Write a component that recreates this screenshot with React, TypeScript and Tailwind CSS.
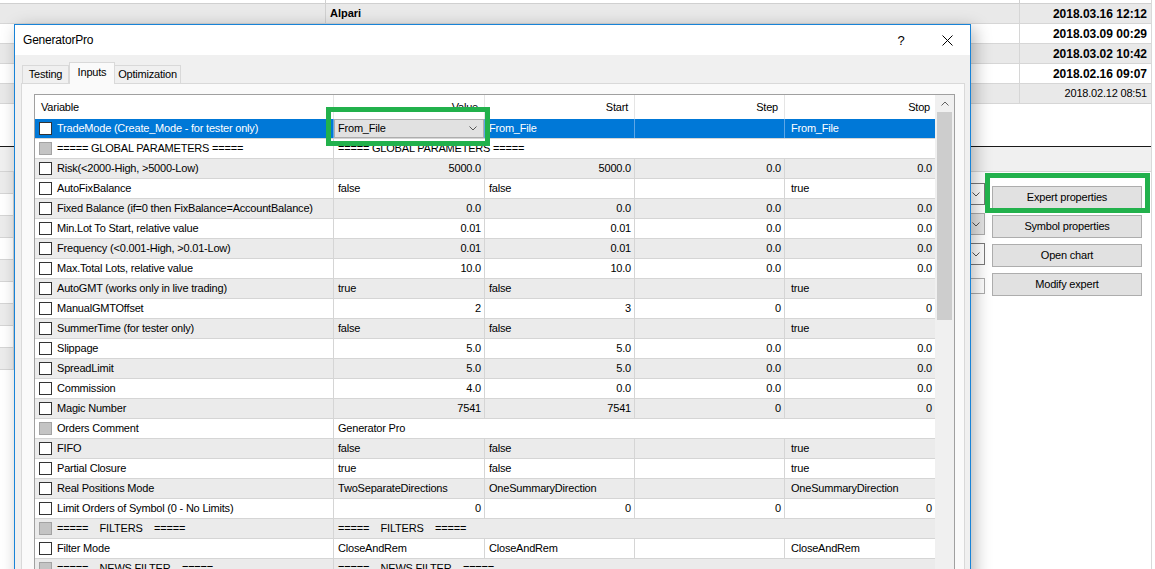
import React from 'react';

type Param = {
  name: string;
  gray?: boolean;
  num?: boolean;
  span?: string;
  v?: string;
  s?: string;
  st?: string;
  sp?: string;
};

const params: Param[] = [
  { name: 'TradeMode (Create_Mode - for tester only)', v: 'From_File', s: 'From_File', st: '', sp: 'From_File' },
  { name: '===== GLOBAL PARAMETERS =====', gray: true, span: '===== GLOBAL PARAMETERS =====' },
  { name: 'Risk(<2000-High, >5000-Low)', num: true, v: '5000.0', s: '5000.0', st: '0.0', sp: '0.0' },
  { name: 'AutoFixBalance', v: 'false', s: 'false', st: '', sp: 'true' },
  { name: 'Fixed Balance (if=0 then FixBalance=AccountBalance)', num: true, v: '0.0', s: '0.0', st: '0.0', sp: '0.0' },
  { name: 'Min.Lot To Start, relative value', num: true, v: '0.01', s: '0.01', st: '0.0', sp: '0.0' },
  { name: 'Frequency (<0.001-High, >0.01-Low)', num: true, v: '0.01', s: '0.01', st: '0.0', sp: '0.0' },
  { name: 'Max.Total Lots, relative value', num: true, v: '10.0', s: '10.0', st: '0.0', sp: '0.0' },
  { name: 'AutoGMT (works only in live trading)', v: 'true', s: 'false', st: '', sp: 'true' },
  { name: 'ManualGMTOffset', num: true, v: '2', s: '3', st: '0', sp: '0' },
  { name: 'SummerTime (for tester only)', v: 'false', s: 'false', st: '', sp: 'true' },
  { name: 'Slippage', num: true, v: '5.0', s: '5.0', st: '0.0', sp: '0.0' },
  { name: 'SpreadLimit', num: true, v: '5.0', s: '5.0', st: '0.0', sp: '0.0' },
  { name: 'Commission', num: true, v: '4.0', s: '0.0', st: '0.0', sp: '0.0' },
  { name: 'Magic Number', num: true, v: '7541', s: '7541', st: '0', sp: '0' },
  { name: 'Orders Comment', gray: true, span: 'Generator Pro' },
  { name: 'FIFO', v: 'false', s: 'false', st: '', sp: 'true' },
  { name: 'Partial Closure', v: 'true', s: 'false', st: '', sp: 'true' },
  { name: 'Real Positions Mode', v: 'TwoSeparateDirections', s: 'OneSummaryDirection', st: '', sp: 'OneSummaryDirection' },
  { name: 'Limit Orders of Symbol (0 - No Limits)', num: true, v: '0', s: '0', st: '0', sp: '0' },
  { name: '=====    FILTERS    =====', gray: true, span: '=====    FILTERS    =====' },
  { name: 'Filter Mode', v: 'CloseAndRem', s: 'CloseAndRem', st: '', sp: 'CloseAndRem' },
  { name: '=====    NEWS FILTER    =====', gray: true, span: '=====    NEWS FILTER    =====' },
];

const history = [
  { label: 'Alpari', date: '2018.03.16 12:12', bold: true },
  { label: '', date: '2018.03.09 00:29', bold: true },
  { label: '', date: '2018.03.02 10:42', bold: true },
  { label: '', date: '2018.02.16 09:07', bold: true },
  { label: '', date: '2018.02.12 08:51', bold: false },
];

function Chevron({ up = false, className = '' }: { up?: boolean; className?: string }) {
  return (
    <svg width="8" height="5" viewBox="0 0 8 5" className={className}>
      <path d={up ? 'M0.5 4.5 L4 1 L7.5 4.5' : 'M0.5 0.5 L4 4 L7.5 0.5'} fill="none" stroke="currentColor" strokeWidth="1" />
    </svg>
  );
}

function CheckBox({ gray }: { gray?: boolean }) {
  return (
    <div
      className={`w-[13px] h-[13px] shrink-0 border ${
        gray ? 'bg-[#c4c4c4] border-[#a3a3a3]' : 'bg-white border-[#333333]'
      }`}
    />
  );
}

/**
 * Background terminal window behind the dialog
 */
function Terminal() {
  return (
    <div className="flex flex-col w-[1152px] h-full border-r border-[#d9d9d9]">
      <div className="h-[4px] flex border-b border-[#d0d0d0]">
        <div className="w-[326px] border-r border-[#d0d0d0]" />
        <div className="flex-1" />
        <div className="w-[132px] border-l border-[#d0d0d0]" />
      </div>

      {/* history rows */}
      {history.map((h, i) => (
        <div
          key={h.date}
          className={`flex h-5 border-b border-[#d6d6d6] ${i % 2 === 0 ? 'bg-[#e9e9e9]' : 'bg-white'}`}
        >
          <div className="w-[326px] border-r border-[#d0d0d0]" />
          <div className="flex-1 flex items-center pl-[4px] font-bold tracking-normal">{h.label}</div>
          <div
            className={`w-[132px] border-l border-[#d6d6d6] flex items-center justify-end pr-[4px] ${
              h.bold ? 'font-bold text-[12px] tracking-normal' : ''
            }`}
          >
            {h.date}
          </div>
        </div>
      ))}

      <div className="h-[43px] bg-white border-b border-[#1a1a1a]" />
      <div className="h-[25px] bg-[#f0f0f0] border-b border-[#d5d5d5]" />

      {/* lower panel */}
      <div className="flex flex-1 bg-white">
        <div className="w-[14px] flex flex-col">
          {[0, 1, 2, 3, 4, 5, 6, 7, 8].map((n) => (
            <div
              key={n}
              className={`h-[22px] border-b border-r border-[#d5d5d5] ${n % 2 === 0 ? 'bg-[#ececec]' : 'bg-white'}`}
            />
          ))}
        </div>

        <div className="w-[975px] flex flex-col items-end pt-[11px] pr-[4px]">
          <div className="w-[120px] h-[22px] border border-[#7a7a7a] bg-white flex items-center justify-end pr-[4px] text-[#555]">
            <Chevron />
          </div>
          <div className="mt-[8px] w-[120px] h-[22px] border border-[#adadad] bg-[#e5e5e5] flex items-center justify-end pr-[4px] text-[#555]">
            <Chevron />
          </div>
          <div className="mt-[8px] w-[120px] h-[22px] border border-[#7a7a7a] bg-white flex items-center justify-end pr-[4px] text-[#555]">
            <Chevron />
          </div>
          <div className="mt-[13px] w-[120px] h-[16px] border border-[#adadad] bg-white" />
        </div>

        <div className="w-[150px] ml-[3px] flex flex-col pt-[14px] gap-[6px]">
          {['Expert properties', 'Symbol properties', 'Open chart', 'Modify expert'].map((b) => (
            <div
              key={b}
              className="h-[23px] bg-[#e1e1e1] border border-[#adadad] flex items-center justify-center"
            >
              {b}
            </div>
          ))}
        </div>
        <div className="flex-1" />
      </div>
    </div>
  );
}

function ParamRow({ p, i }: { p: Param; i: number }) {
  const sel = i === 0;
  const bg = sel ? 'bg-[#0078d7] text-white' : i % 2 === 0 ? 'bg-[#ebebeb]' : 'bg-white';
  const line = sel ? 'border-[#5ea6e6]' : 'border-[#d5d5d5]';
  const cells = [p.v, p.s, p.st, p.sp];
  const widths = ['w-[151px]', 'w-[150px]', 'w-[150px]', 'w-[150px]'];

  return (
    <div className={`flex h-5 shrink-0 border-b border-[#d5d5d5] ${bg}`}>
      <div className={`w-[299px] flex items-center pl-[4px] border-r ${line}`}>
        <CheckBox gray={p.gray} />
        <span className="ml-[5px] whitespace-pre">{p.name}</span>
      </div>

      {p.span !== undefined ? (
        <div className="w-[601px] flex items-center pl-[4px] whitespace-pre">{p.span}</div>
      ) : (
        cells.map((c, ci) => {
          // value cell of the selected row is an open combobox
          if (sel && ci === 0) {
            return (
              <div key={ci} className={`${widths[ci]} border-r ${line}`}>
                <div className="h-full bg-[#e1e1e1] border border-[#adadad] flex items-center pl-[3px] pr-[6px] text-black">
                  <span className="flex-1">{c}</span>
                  <Chevron className="text-[#555]" />
                </div>
              </div>
            );
          }
          return (
            <div
              key={ci}
              className={`${widths[ci]} flex items-center ${ci < 3 ? `border-r ${line}` : ''} ${
                p.num ? 'justify-end pr-[3px]' : ci === 3 ? 'pl-[6px]' : 'pl-[4px]'
              }`}
            >
              {c}
            </div>
          );
        })
      )}
    </div>
  );
}

/**
 * Expert properties dialog
 */
function Dialog() {
  return (
    <div className="absolute left-[14px] top-[24px] w-[957px] h-[560px] border border-[#1883d7] bg-[#f0f0f0] flex flex-col shadow-[4px_4px_16px_rgba(0,0,0,0.28)]">
      {/* Title bar */}
      <div className="h-[30px] shrink-0 bg-white flex items-center">
        <span className="flex-1 pl-[8px] text-[12px]">GeneratorPro</span>
        <div className="w-[46px] h-full flex items-center justify-center text-[13px] tracking-normal">?</div>
        <div className="w-[46px] h-full flex items-center justify-center">
          <svg width="11" height="11" viewBox="0 0 11 11">
            <path d="M0.5 0.5 L10.5 10.5 M10.5 0.5 L0.5 10.5" stroke="#000" strokeWidth="1" />
          </svg>
        </div>
      </div>

      <div className="flex-1 flex flex-col pl-[6px] pt-[7px]">
        {/* Tabs */}
        <div className="h-[21px] shrink-0 flex items-end pl-[1px]">
          <div className="w-[47px] h-[18px] border border-b-0 border-[#d9d9d9] flex items-center justify-center">
            Testing
          </div>
          <div className="relative z-10 w-[46px] h-[22px] -mb-px border border-b-0 border-[#d9d9d9] bg-[#fafafa] flex items-center justify-center pb-[2px]">
            Inputs
          </div>
          <div className="w-[66px] h-[18px] border border-l-0 border-b-0 border-[#d9d9d9] flex items-center justify-center">
            Optimization
          </div>
        </div>

        {/* Tab panel */}
        <div className="w-[944px] flex-1 border border-[#d9d9d9] bg-[#fafafa] pl-[12px] pt-[10px]">
          <div className="w-[921px] h-[480px] border border-[#a0a0a0] bg-white flex">
            <div className="w-[900px] flex flex-col">
              {/* header */}
              <div className="h-[24px] shrink-0 flex bg-white">
                <div className="w-[299px] border-r border-[#e5e5e5] flex items-center pl-[6px]">Variable</div>
                <div className="w-[151px] border-r border-[#e5e5e5] flex items-center justify-end pr-[6px]">Value</div>
                <div className="w-[150px] border-r border-[#e5e5e5] flex items-center justify-end pr-[6px]">Start</div>
                <div className="w-[150px] border-r border-[#e5e5e5] flex items-center justify-end pr-[6px]">Step</div>
                <div className="w-[150px] flex items-center justify-end pr-[5px]">Stop</div>
              </div>
              {params.map((p, i) => (
                <ParamRow key={p.name} p={p} i={i} />
              ))}
            </div>

            {/* vertical scrollbar */}
            <div className="w-[19px] bg-[#f0f0f0] flex flex-col px-[2px]">
              <div className="h-[17px] flex items-center justify-center text-[#606060]">
                <Chevron up />
              </div>
              <div className="h-[208px] bg-[#cdcdcd]" />
            </div>
          </div>
        </div>
      </div>
    </div>
  );
}

export default function App() {
  return (
    <div className="relative w-[1155px] h-[569px] overflow-hidden bg-white text-black text-[11px] tracking-[-0.2px] leading-none font-['Liberation_Sans',Arial,sans-serif]">
      <Terminal />
      <Dialog />

      {/* green annotation frames */}
      <div className="absolute left-[326px] top-[107px] w-[164px] h-[39px] border-[5px] border-[#22b14c]" />
      <div className="absolute left-[985px] top-[173px] w-[165px] h-[40px] border-[5px] border-[#22b14c]" />
    </div>
  );
}
